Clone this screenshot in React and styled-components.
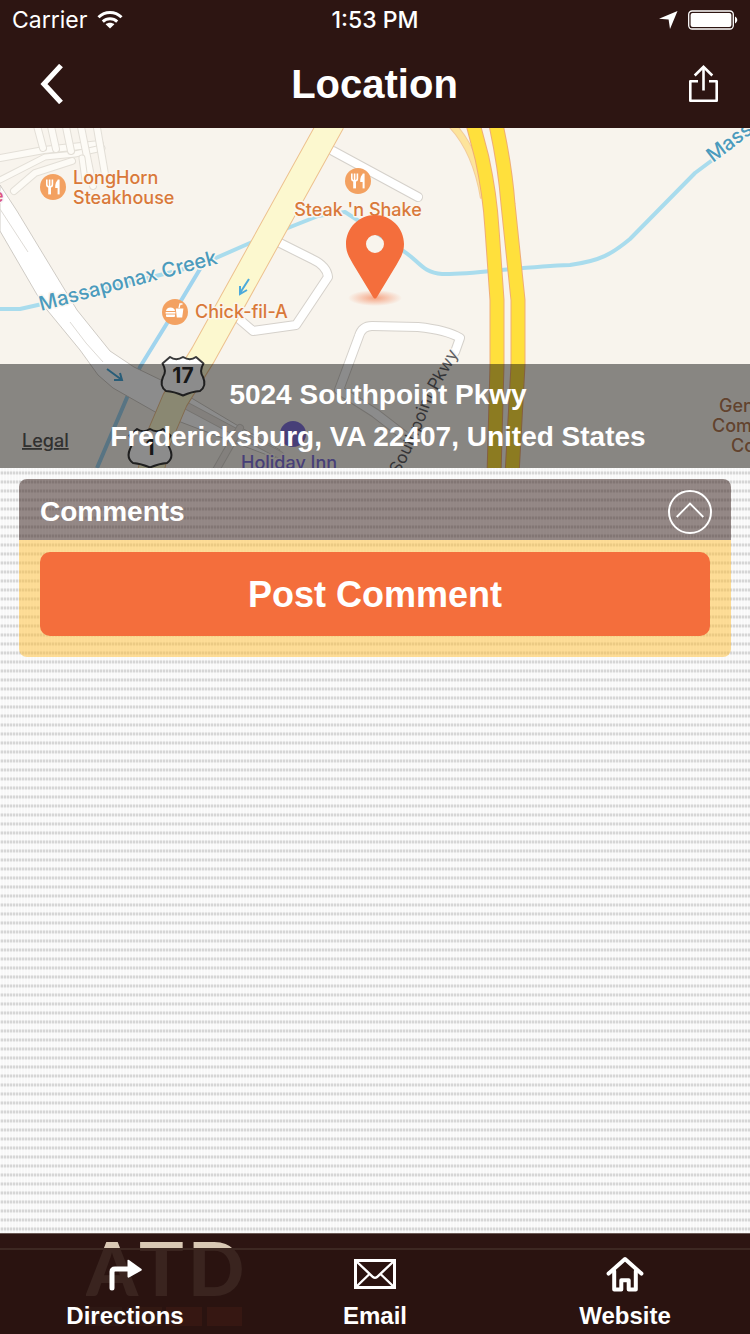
import React from "react";
import styled, { createGlobalStyle } from "styled-components";

const GlobalStyle = createGlobalStyle`
  * { box-sizing: border-box; }
  body { margin: 0; }
  button { border: 0; margin: 0; padding: 0; background: none; color: inherit; font: inherit; cursor: pointer; }
`;

const MAROON = "#2d1512";
const ORANGE = "#f46e3c";

const Page = styled.div`
  min-height: 100vh;
  display: flex;
  flex-direction: column;
  color: #fff;
  font-family: "Liberation Sans", Arial, sans-serif;
  font-weight: 700;
  background-color: #f7f7f7;
  background-image:
    repeating-linear-gradient(90deg, rgba(255, 255, 255, 0.6) 0 1px, transparent 1px 3px),
    repeating-linear-gradient(180deg, #f8f8f8 0 3px, #e6e6e6 3px 4px, #d6d6d6 4px 6px, #e8e8e8 6px 7px, #f8f8f8 7px 9px);
`;

const Header = styled.header`
  background: ${MAROON};
`;

const StatusBar = styled.div`
  height: 40px;
  padding: 0 12px;
  display: grid;
  grid-template-columns: 1fr auto 1fr;
  align-items: center;
  font-family: Inter, "Liberation Sans", sans-serif;
  font-size: 23px;
  font-weight: 400;
`;

const StatusGroup = styled.div`
  display: flex;
  align-items: center;
  gap: 10px;
  justify-content: ${(p) => (p.$end ? "flex-end" : "flex-start")};
`;

const Time = styled.span`
  font-weight: 500;
`;

const NavBar = styled.div`
  height: 88px;
  padding: 0 31px 0 40px;
  display: grid;
  grid-template-columns: 1fr auto 1fr;
  align-items: center;
`;

const Title = styled.h1`
  margin: 0;
  padding-right: 10px;
  font-size: 40px;
  line-height: 80px;
`;

const IconButton = styled.button`
  display: flex;
  justify-self: ${(p) => (p.$end ? "end" : "start")};
`;

const MapArea = styled.section`
  position: relative;
  height: 340px;
  overflow: hidden;
  background: #f8f4ed;
`;

const MapSvg = styled.svg`
  display: block;
  width: 100%;
  height: 100%;
`;

const AddressStrip = styled.div`
  position: absolute;
  inset: auto 0 0 0;
  height: 104px;
  padding: 10px 0 10px 6px;
  background: rgba(0, 0, 0, 0.45);
  text-align: center;
  font-size: 28px;
  line-height: 42px;
`;

const AddressLine = styled.div`
  white-space: nowrap;
`;

const Main = styled.main`
  flex: 1;
  padding: 11px 19px;
`;

const Card = styled.section`
  border-radius: 8px;
  overflow: hidden;
`;

const CardHeader = styled.div`
  height: 61px;
  padding: 4px 19px 0 21px;
  display: flex;
  align-items: center;
  justify-content: space-between;
  background: rgba(45, 21, 18, 0.5);
`;

const CardTitle = styled.h2`
  margin: 0;
  font-size: 28px;
  line-height: 56px;
`;

const CardBody = styled.div`
  padding: 12px 21px 21px;
  background: rgba(255, 190, 50, 0.5);
`;

const PostButton = styled.button`
  display: block;
  width: 100%;
  height: 84px;
  padding-top: 2px;
  border-radius: 10px;
  background: ${ORANGE};
  font-size: 36px;
`;

const Footer = styled.footer`
  position: relative;
  padding-top: 14px;
  background: ${MAROON};
  border-top: 1px solid #6b5a55;
`;

const BrandLogo = styled.svg`
  position: absolute;
  left: 86px;
  top: 8px;
`;

const TabBar = styled.nav`
  position: relative;
  height: 86px;
  display: flex;
  background: rgba(42, 20, 17, 0.91);
  box-shadow: inset 0 2px 0 #3d2822;
`;

const Tab = styled.a`
  flex: 1;
  padding-top: 8px;
  display: flex;
  flex-direction: column;
  align-items: center;
  gap: 8px;
  color: #fff;
  text-decoration: none;
  font-size: 24px;
  line-height: 32px;
`;

function WifiIcon() {
  return (
    <svg width="26" height="20" viewBox="0 0 26 20" fill="none" stroke="#fff" strokeWidth="3">
      <path d="M1.5 7.2C8 0.8 18 0.8 24.5 7.2" />
      <path d="M5.8 11.6C10 7.8 16 7.8 20.2 11.6" />
      <path d="M13 18.5 L8.6 14.2C11.2 12.2 14.8 12.2 17.4 14.2Z" fill="#fff" stroke="none" />
    </svg>
  );
}

function LocationArrow() {
  return (
    <svg width="19" height="18" viewBox="0 0 19 18">
      <path d="M18.5 0 L0 7.8 L9.6 8.6 L11 18Z" fill="#fff" />
    </svg>
  );
}

function Battery() {
  return (
    <svg width="50" height="20" viewBox="0 0 50 20">
      <rect x="0.7" y="1" width="44.6" height="18" rx="3.5" fill="none" stroke="#fff" strokeWidth="1.3" />
      <rect x="2.6" y="2.9" width="40.8" height="14.2" rx="2" fill="#fff" />
      <path d="M47 6.6C50 8 50 12 47 13.4Z" fill="#fff" />
    </svg>
  );
}

function BackIcon() {
  return (
    <svg width="24" height="40" viewBox="0 0 24 40" fill="none" stroke="#fff" strokeWidth="5.2">
      <path d="M21 1.6 L4 20 L21 38.4" />
    </svg>
  );
}

function ShareIcon() {
  return (
    <svg width="32" height="38" viewBox="0 0 32 38" fill="none" stroke="#fff" strokeWidth="2.6">
      <path d="M11 16.3 H3.3 V35.7 H29.7 V16.3 H22" strokeLinejoin="round" />
      <path d="M16.5 25.5 V2.5" />
      <path d="M7.7 10.5 L16.5 1.9 L25.3 10.5" />
    </svg>
  );
}

function CollapseIcon() {
  return (
    <svg width="44" height="44" viewBox="0 0 44 44" fill="none" stroke="#fff">
      <circle cx="22" cy="22" r="21" strokeWidth="2" />
      <path d="M8.7 27 L22 13.5 L35.3 27" strokeWidth="1.8" />
    </svg>
  );
}

function TurnIcon() {
  return (
    <svg width="36" height="36" viewBox="0 0 36 36">
      <path d="M5 32 V16 Q5 13 8 13 H22" fill="none" stroke="#fff" strokeWidth="5" strokeLinecap="round" />
      <path d="M20.5 4 Q21 3.3 22 4 L34.5 13 Q35.2 13.8 34.5 14.5 L22 21.5 Q20.5 22 20.5 20.5Z" fill="#fff" />
    </svg>
  );
}

function MailIcon() {
  return (
    <svg width="42" height="36" viewBox="0 0 42 36" fill="none" stroke="#fff">
      <rect x="1.5" y="4.5" width="39" height="27" strokeWidth="3" />
      <path d="M2 5 L19 21 Q21 22.6 23 21 L40 5 M2 31 L15.5 18 M40 31 L26.5 18" strokeWidth="2.4" />
    </svg>
  );
}

function HomeIcon() {
  return (
    <svg width="38" height="36" viewBox="0 0 38 36" fill="none" stroke="#fff" strokeWidth="4" strokeLinejoin="round" strokeLinecap="round">
      <path d="M2.6 17.6 L19 3 L35.4 17.6" />
      <path d="M8.2 15 V33.5 H15.3 V24.3 H22.7 V33.5 H29.8 V15" />
    </svg>
  );
}

const MapText = styled.text`
  font-family: Inter, "Liberation Sans", sans-serif;
  font-size: ${(p) => p.$size || 18}px;
  font-weight: ${(p) => p.$weight || 500};
  fill: ${(p) => p.$color || "#d9793a"};
  stroke: ${(p) => p.$halo || "#faf6ef"};
  stroke-width: 3px;
  stroke-linejoin: round;
  paint-order: stroke;
`;

function Road({ d, width = 8, fill = "#fff", edge = "#d5d1cb", cap = "round" }) {
  return (
    <g fill="none" strokeLinejoin="round" strokeLinecap={cap}>
      <path d={d} stroke={edge} strokeWidth={width + 2} />
      <path d={d} stroke={fill} strokeWidth={width} />
    </g>
  );
}

function Restaurant({ x, y }) {
  return (
    <g transform={`translate(${x} ${y})`}>
      <circle r="13" fill="#f3a161" />
      <g stroke="#fff" fill="none">
        <path d="M-6.2 -7.5 V-2.5 Q-6.2 0 -3.4 0 Q-0.6 0 -0.6 -2.5 V-7.5 M-3.4 -7.5 V0" strokeWidth="1.6" />
        <path d="M-3.4 0 V7.4" strokeWidth="2.8" />
        <path d="M5.6 -7.4 V7.4" strokeWidth="2" />
        <path d="M5.6 -7.4 Q1.8 -5 2.2 1 H5.6Z" fill="#fff" stroke="none" />
      </g>
    </g>
  );
}

function Burger({ x, y }) {
  return (
    <g transform={`translate(${x} ${y})`} fill="#fff">
      <circle r="13" fill="#f3a161" />
      <path d="M-9 -1 Q-8.5 -4.6 -4.5 -4.6 Q-0.5 -4.6 0 -1Z" />
      <rect x="-9.4" y="0" width="9.8" height="1.6" />
      <path d="M-9 2.6 H0 V4 Q0 5 -1 5 H-8 Q-9 5 -9 4Z" />
      <path d="M0.8 -3.6 H8.4 L7.2 5.4 H1.8Z" />
      <path d="M4 -4 L5 -8 L7.5 -8" fill="none" stroke="#fff" strokeWidth="1.3" />
    </g>
  );
}

function Shield({ x, y, children }) {
  return (
    <g transform={`translate(${x} ${y})`}>
      <path
        d="M-13 -19 Q-7 -14.5 0 -19 Q7 -14.5 13 -19 L20.5 -12.5 Q16 -5 20 1 Q24 10 17 15 Q9 15.5 0 19.5 Q-9 15.5 -17 15 Q-24 10 -20 1 Q-16 -5 -20.5 -12.5Z"
        fill="#fff"
        stroke="#39393a"
        strokeWidth="2"
        strokeLinejoin="round"
      />
      <text y="7" textAnchor="middle" fontFamily="Inter, sans-serif" fontWeight="700" fontSize="21" fill="#2b2b2b">
        {children}
      </text>
    </g>
  );
}

function StreetMap() {
  const creek = { fill: "none", stroke: "#a9dced", strokeWidth: 4, strokeLinejoin: "round" };
  return (
    <MapSvg viewBox="0 128 750 340" preserveAspectRatio="xMidYMid slice" role="img" aria-label="Map">
      <defs>
        <radialGradient id="pinShadow">
          <stop offset="0" stopColor="#f46e3c" stopOpacity="0.6" />
          <stop offset="1" stopColor="#f46e3c" stopOpacity="0" />
        </radialGradient>
        <path id="creekEast" d="M713 163 L775 116" />
        <path id="parkway" d="M399 475 Q419 438 432 400 L464 344" />
      </defs>
      <rect y="128" width="750" height="340" fill="#f8f4ed" />

      <Road d="M0 158 L44 150 L100 144" width={6} fill="#fdfbf6" edge="#e3dfd7" />
      <Road d="M0 180 L45 157 L75 154 L102 148" width={5} fill="#fdfbf6" edge="#e3dfd7" />
      <Road d="M14 191 L35 173 L72 161" width={6} fill="#fdfbf6" edge="#e3dfd7" />
      <Road d="M36 122 L43 148" width={6} fill="#fdfbf6" edge="#e3dfd7" />
      <Road d="M50 122 L56 149" width={6} fill="#fdfbf6" edge="#e3dfd7" />
      <Road d="M65 122 L71 151" width={6} fill="#fdfbf6" edge="#e3dfd7" />
      <Road d="M80 122 L93 186" width={6} fill="#fdfbf6" edge="#e3dfd7" />
      <Road d="M96 122 L106 180" width={6} fill="#fdfbf6" edge="#e3dfd7" />
      <Road d="M82 158 L85 180" width={5} fill="#fdfbf6" edge="#e3dfd7" />

      <path d="M0 309 H20 L60 300 L200 265 L250 243 L318 216 L345 212 Q382 236 395 246 C418 257 420 273 442 274 C470 275 515 267 570 265 C600 261 612 254 630 239 L695 173 L750 132" {...creek} />
      <path d="M203 264 L182 299 L140 367 L97 468" {...creek} stroke="#a0d4ee" />

      <path
        d="M0 185 L17 211 L77 310 L110 351 L134 367 L163 381 L235 424 L280 450 L275 458 L157 413 L113 388 L98 375 L80 350 L43 305 L0 231Z"
        fill="#fff"
        stroke="#cfcbc5"
        strokeWidth="1"
      />
      <path d="M0 209 L28 252 M70 322 L86 343 L103 362" stroke="#dedbd6" fill="none" />
      <Road d="M187 406 L232 430 L280 455" width={6} fill="#eeeae4" />
      <Road d="M240 428 L215 472" width={6} fill="#eeeae4" />

      <Road d="M333 151 L418 197" />
      <Road d="M280 243 L312 259 Q327 266 328 277 L296 325 L253 331 L239 319" />
      <Road d="M410 440 L375 413 L339 390 L359 336 Q362 326 372 326 L418 327 Q447 330 460 338 L455 352" />

      <Road d="M332 122 L203 355 L175 400 L158 440 L150 475" width={25} fill="#fcf8cf" edge="#edc18e" cap="butt" />

      <Road d="M451 124 Q476 150 484 198" width={6} fill="#fde49b" edge="#f3cd9b" cap="butt" />
      <Road d="M472 120 L482 158 Q490 195 492 229 L497 300 V365 L494 475" width={13} fill="#ffe03c" edge="#efad76" cap="butt" />
      <Road d="M495 120 Q505 165 508 204 L518 300 V365 L512 475" width={13} fill="#ffe03c" edge="#efad76" cap="butt" />

      <g fill="none" stroke="#4caadb" strokeWidth="2">
        <path d="M249 279 L240 293 M240 286 V294 L247 290" />
        <path d="M107 369 L122 380 M120 373 L122 380 L114 380" />
      </g>

      <Restaurant x={53} y={187} />
      <Restaurant x={358} y={181} />
      <Burger x={175} y={312} />
      <circle cx="293" cy="434" r="13" fill="#8274da" />

      <MapText x="73" y="184">LongHorn</MapText>
      <MapText x="73" y="204">Steakhouse</MapText>
      <MapText x="358" y="216" textAnchor="middle">Steak 'n Shake</MapText>
      <MapText x="195" y="318">Chick-fil-A</MapText>
      <MapText x="-7" y="202" $color="#dc5480">e</MapText>
      <MapText $size={20} $color="#4b9bbd" transform="translate(41 311) rotate(-15)">Massaponax Creek</MapText>
      <MapText $size={20} $color="#4b9bbd"><textPath href="#creekEast">Mass</textPath></MapText>
      <MapText $size={17} $weight={400} $color="#606064" $halo="#f8f4ed"><textPath href="#parkway">Southpoint Pkwy</textPath></MapText>
      <MapText x="241" y="469" $color="#8274da">Holiday Inn</MapText>
      <MapText x="719" y="412" $color="#b27a55">General</MapText>
      <MapText x="712" y="432" $color="#b27a55">Commons</MapText>
      <MapText x="731" y="452" $color="#b27a55">Court</MapText>
      <MapText x="22" y="447" $color="#5a5a58" $halo="none" textDecoration="underline">Legal</MapText>

      <Shield x={183} y={376}>17</Shield>
      <Shield x={150} y={448}>1</Shield>

      <ellipse cx="375" cy="298" rx="27" ry="8" fill="url(#pinShadow)" />
      <path
        fillRule="evenodd"
        fill="#f46e3c"
        d="M375 215 C391 215 404 228 404 244 C404 252 401 257 397 264 L377 297 Q375 300 373 297 L353 264 C349 257 346 252 346 244 C346 228 359 215 375 215Z M375 235 A9 9 0 1 0 375 253 A9 9 0 1 0 375 235Z"
      />
    </MapSvg>
  );
}

function Brand() {
  return (
    <BrandLogo width="160" height="86" viewBox="0 0 160 86" aria-hidden="true">
      <g fill="#d9c8b4" fontFamily="Lato, sans-serif" fontWeight="900" fontSize="74">
        <text x="0" y="54">A</text>
        <text x="53" y="54">T</text>
        <text x="102" y="54">D</text>
      </g>
      <rect x="0" y="65" width="36" height="19" fill="#5c4a3c" />
      <rect x="41" y="65" width="35" height="19" fill="#8a4a28" />
      <rect x="80" y="65" width="36" height="19" fill="#b03a24" />
      <rect x="121" y="65" width="35" height="19" fill="#b03a24" />
    </BrandLogo>
  );
}

export default function App() {
  return (
    <>
      <GlobalStyle />
      <Page>
        <Header>
          <StatusBar>
            <StatusGroup>
              <span>Carrier</span>
              <WifiIcon />
            </StatusGroup>
            <Time>1:53 PM</Time>
            <StatusGroup $end>
              <LocationArrow />
              <Battery />
            </StatusGroup>
          </StatusBar>
          <NavBar>
            <IconButton type="button" aria-label="Back"><BackIcon /></IconButton>
            <Title>Location</Title>
            <IconButton type="button" aria-label="Share" $end><ShareIcon /></IconButton>
          </NavBar>
        </Header>
        <MapArea>
          <StreetMap />
          <AddressStrip>
            <AddressLine>5024 Southpoint Pkwy</AddressLine>
            <AddressLine>Fredericksburg, VA 22407, United States</AddressLine>
          </AddressStrip>
        </MapArea>
        <Main>
          <Card>
            <CardHeader>
              <CardTitle>Comments</CardTitle>
              <IconButton type="button" aria-label="Collapse comments"><CollapseIcon /></IconButton>
            </CardHeader>
            <CardBody>
              <PostButton type="button">Post Comment</PostButton>
            </CardBody>
          </Card>
        </Main>
        <Footer>
          <Brand />
          <TabBar>
            <Tab href="#directions"><TurnIcon />Directions</Tab>
            <Tab href="#email"><MailIcon />Email</Tab>
            <Tab href="#website"><HomeIcon />Website</Tab>
          </TabBar>
        </Footer>
      </Page>
    </>
  );
}
